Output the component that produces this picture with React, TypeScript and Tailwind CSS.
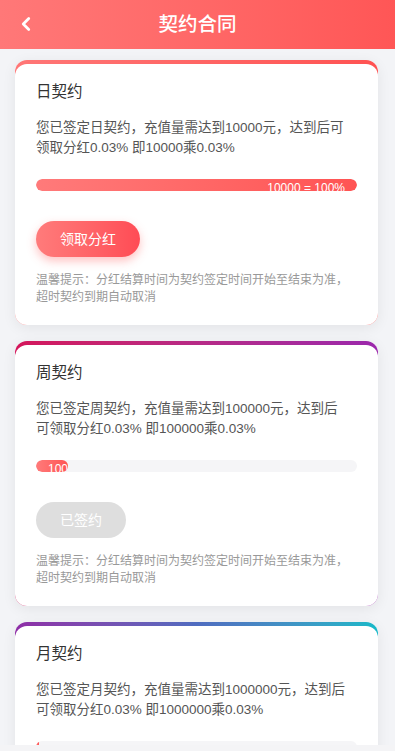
import { ChevronLeft } from "lucide-react";

type Contract = {
  name: string;
  target: string;
  percent: number;
  label: string;
  band: string;
  signed: boolean;
};

const contracts: Contract[] = [
  {
    name: "日契约",
    target: "10000",
    percent: 100,
    label: "10000 = 100%",
    band: "bg-gradient-to-r from-[#ff7676] to-[#ff5252]",
    signed: false,
  },
  {
    name: "周契约",
    target: "100000",
    percent: 10,
    label: "10000 = 10%",
    band: "bg-gradient-to-r from-[#d4145a] to-[#9b27ac]",
    signed: true,
  },
  {
    name: "月契约",
    target: "1000000",
    percent: 1,
    label: "10000 = 1%",
    band: "bg-gradient-to-r from-[#8e2ca6] via-[#4f6cc0] to-[#15b8c8]",
    signed: true,
  },
];

function ContractCard({ c }: { c: Contract }) {
  return (
    <div className={`ml-[15px] mr-[17px] rounded-[12px] pt-[4px] shadow-[0_3px_14px_rgba(0,0,0,0.07)] ${c.band}`}>
      <div className="bg-white rounded-[12px] px-[21px] pt-[16px] pb-[19px] h-[261px]">
        <h2 className="text-[15.5px] leading-[24px] text-[#333]">{c.name}</h2>
        <p className="mt-[14px] text-[13.5px] leading-[20px] text-[#555] pr-[9px]">
          您已签定{c.name}，充值量需达到{c.target}元，达到后可领取分红0.03% 即{c.target}乘0.03%
        </p>

        {/* progress */}
        <div className="mt-[21px] h-[12px] rounded-full bg-[#f5f5f7] overflow-hidden">
          <div
            className="h-full rounded-full overflow-hidden bg-gradient-to-r from-[#ff7a7a] to-[#ff5353]"
            style={{ width: `${c.percent}%` }}
          >
            <div className="px-3 text-right whitespace-nowrap text-[12px] leading-[18px] text-white">
              {c.label}
            </div>
          </div>
        </div>

        {c.signed ? (
          <button className="mt-[30px] h-[36px] px-6 rounded-full bg-[#dedede] text-white text-[14px]">
            已签约
          </button>
        ) : (
          <button className="mt-[30px] h-[36px] px-6 rounded-full bg-gradient-to-r from-[#ff7b7b] to-[#ff4b55] text-white text-[14px] shadow-[0_4px_10px_rgba(255,80,80,0.35)]">
            领取分红
          </button>
        )}

        <p className="mt-[15px] text-[12px] leading-[17px] text-[#999]">
          温馨提示：分红结算时间为契约签定时间开始至结束为准，超时契约到期自动取消
        </p>
      </div>
    </div>
  );
}

export default function App() {
  return (
    <div
      className="min-h-screen bg-[#f3f4f7] pb-6"
      style={{ fontFamily: '"Liberation Sans", "Noto Sans CJK SC", sans-serif' }}
    >
      <header className="relative h-[49px] flex items-center justify-center bg-gradient-to-r from-[#ff7878] to-[#ff5656]">
        <ChevronLeft className="absolute left-[15px] top-[13px] w-[22px] h-[22px] text-white" strokeWidth={3} />
        <h1 className="text-[19.5px] font-medium text-white">契约合同</h1>
      </header>

      <div className="flex flex-col gap-[16px] pt-[11px]">
        {contracts.map((c) => (
          <ContractCard key={c.name} c={c} />
        ))}
      </div>

      <div className="fixed bottom-0 left-0 right-0 h-[6px] bg-[#f4f4f6]" />
    </div>
  );
}
